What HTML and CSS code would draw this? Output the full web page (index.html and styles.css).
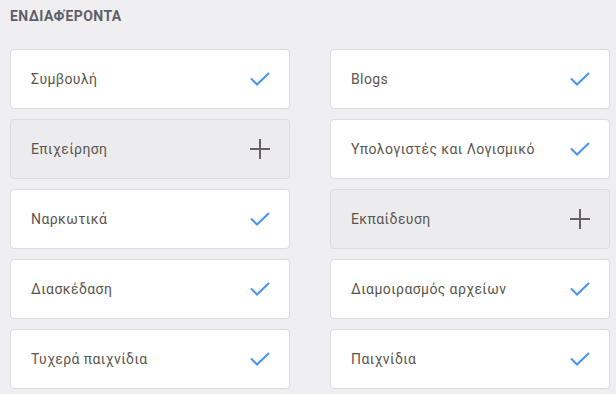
FILE: index.html
```html
<!DOCTYPE html>
<html lang="el">
<head>
    <meta charset="UTF-8">
    <title>Ενδιαφέροντα</title>
    <link rel="stylesheet" href="styles.css">
</head>
<body>
    <div class="container">
        <h2>ΕΝΔΙΑΦΈΡΟΝΤΑ</h2>
        <div class="interests-grid">
            <div class="interest selected"><span>Συμβουλή</span><svg class="icon" viewBox="0 0 20 14"><path d="M1 6.5 L7 12.5 L19 1"/></svg></div>
            <div class="interest selected"><span>Blogs</span><svg class="icon" viewBox="0 0 20 14"><path d="M1 6.5 L7 12.5 L19 1"/></svg></div>
            <div class="interest"><span>Επιχείρηση</span><svg class="icon plus" viewBox="0 0 20 20"><path d="M10 0 V20 M0 10 H20"/></svg></div>
            <div class="interest selected"><span>Υπολογιστές και Λογισμικό</span><svg class="icon" viewBox="0 0 20 14"><path d="M1 6.5 L7 12.5 L19 1"/></svg></div>
            <div class="interest selected"><span>Ναρκωτικά</span><svg class="icon" viewBox="0 0 20 14"><path d="M1 6.5 L7 12.5 L19 1"/></svg></div>
            <div class="interest"><span>Εκπαίδευση</span><svg class="icon plus" viewBox="0 0 20 20"><path d="M10 0 V20 M0 10 H20"/></svg></div>
            <div class="interest selected"><span>Διασκέδαση</span><svg class="icon" viewBox="0 0 20 14"><path d="M1 6.5 L7 12.5 L19 1"/></svg></div>
            <div class="interest selected"><span>Διαμοιρασμός αρχείων</span><svg class="icon" viewBox="0 0 20 14"><path d="M1 6.5 L7 12.5 L19 1"/></svg></div>
            <div class="interest selected"><span>Τυχερά παιχνίδια</span><svg class="icon" viewBox="0 0 20 14"><path d="M1 6.5 L7 12.5 L19 1"/></svg></div>
            <div class="interest selected"><span>Παιχνίδια</span><svg class="icon" viewBox="0 0 20 14"><path d="M1 6.5 L7 12.5 L19 1"/></svg></div>
        </div>
    </div>
</body>
</html>
```
FILE: styles.css
```css
:root {
    --bg: #efeff1;
    --card: #ffffff;
    --border: #dcdcde;
    --text: #5b5550;
    --title: #5f5f68;
    --blue: #4a94f0;
    --plus: #666066;
}

body {
    font-family: Roboto, 'Noto Sans', sans-serif;
    background-color: var(--bg);
    margin: 0;
    padding: 0;
}

.container {
    padding: 10px 7px 0 10px;
}

h2 {
    margin: 0 0 27px 0;
    font-size: 14px;
    font-weight: bold;
    letter-spacing: 0.4px;
    line-height: 12px;
    color: var(--title);
}

.interests-grid {
    display: grid;
    grid-template-columns: 280px 280px;
    column-gap: 40px;
    row-gap: 10px;
}

.interest {
    height: 60px;
    box-sizing: border-box;
    background: var(--card);
    border: 1px solid var(--border);
    border-radius: 4px;
    padding: 0 19px 1px 20px;
    display: flex;
    align-items: center;
    justify-content: space-between;
    font-size: 14px;
    letter-spacing: 0.4px;
    color: var(--text);
}

.interest:not(.selected) {
    background: #ececee;
}

.icon {
    width: 20px;
    height: 14px;
    fill: none;
    stroke: var(--blue);
    stroke-width: 2;
}

.icon.plus {
    height: 20px;
    stroke: var(--plus);
}
```
